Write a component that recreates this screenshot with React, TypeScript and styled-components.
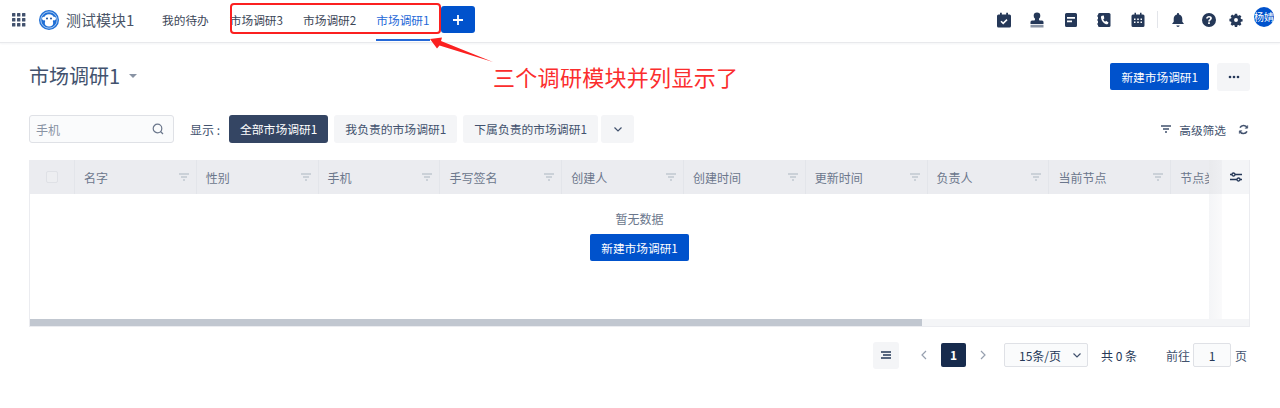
import React from "react";
import styled, { createGlobalStyle, css } from "styled-components";

const font = `"Noto Sans CJK SC", "Noto Sans", sans-serif`;

const GlobalStyle = createGlobalStyle`
  html, body {
    margin: 0;
    padding: 0;
    background: #fff;
    font-family: ${font};
    overflow: hidden;
  }
  * { box-sizing: border-box; }
`;

// 顶栏内容比导航下划线略高一点
const raised = css`
  margin-bottom: 3px;
`;

const Page = styled.div`
  position: relative;
  width: 1280px;
  height: 408px;
  overflow: hidden;
`;

const TopBar = styled.header`
  display: flex;
  align-items: center;
  height: 43px;
  padding: 0 6px 0 12px;
  border-bottom: 1px solid #e8e9ec;
  box-shadow: 0 1px 2px rgba(23, 43, 77, 0.05);
`;

const Grid = styled.svg`
  ${raised};
  width: 14px;
  height: 14px;
  margin-right: 13px;
  flex: none;
`;

const Logo = styled.svg`
  ${raised};
  width: 20px;
  height: 20px;
  margin-right: 7px;
  flex: none;
`;

const ModuleName = styled.div`
  ${raised};
  font-size: 15px;
  color: #4a5568;
  width: 69px;
  margin-right: 27px;
  white-space: nowrap;
`;

const NavItem = styled.div<{ $active?: boolean; $gap?: number }>`
  position: relative;
  height: 42px;
  line-height: 40px;
  font-size: 11.7px;
  white-space: nowrap;
  color: ${(p) => (p.$active ? "#2468d8" : "#3c4657")};
  margin-right: ${(p) => p.$gap ?? 20}px;
  &::after {
    content: "";
    display: ${(p) => (p.$active ? "block" : "none")};
    position: absolute;
    left: 0;
    right: 0;
    bottom: 1px;
    height: 2px;
    background: #2468d8;
  }
`;

const AddButton = styled.button`
  ${raised};
  width: 34px;
  height: 27px;
  border: 0;
  padding: 0;
  border-radius: 3px;
  background: #0052cc;
  display: flex;
  align-items: center;
  justify-content: center;
  margin-left: -9px;
`;

const Spacer = styled.div`
  flex: 1;
`;

const ToolIcon = styled.svg<{ $gap?: number }>`
  ${raised};
  width: 16px;
  height: 16px;
  flex: none;
  margin-right: ${(p) => p.$gap ?? 17.5}px;
  fill: #253858;
`;

const Divider = styled.div`
  ${raised};
  width: 1px;
  height: 17px;
  background: #e3e5ea;
  margin-right: 12px;
`;

const Avatar = styled.div`
  width: 20px;
  height: 20px;
  border-radius: 50%;
  background: #0052cc;
  color: #fff;
  font-size: 10px;
  line-height: 20px;
  text-align: center;
  overflow: hidden;
  white-space: nowrap;
  margin-bottom: 8px;
  display: flex;
  justify-content: center;
`;

const Content = styled.main`
  padding: 20px 30px 0 29px;
`;

const TitleRow = styled.div`
  display: flex;
  align-items: center;
  justify-content: space-between;
  height: 28px;
`;

const Title = styled.h1`
  margin: 0;
  display: flex;
  align-items: center;
  gap: 9px;
  padding-bottom: 3px;
  font-size: 20px;
  font-weight: 400;
  color: #42526e;
  &::after {
    content: "";
    border: 4px solid transparent;
    border-top: 4.5px solid #8993a4;
    border-bottom: 0;
    margin-top: 1px;
  }
`;

const Actions = styled.div`
  display: flex;
  gap: 8px;
`;

const PrimaryButton = styled.button`
  height: 27px;
  padding: 0 11px;
  border: 0;
  border-radius: 2px;
  background: #0052cc;
  color: #fff;
  font: 11.7px ${font};
  white-space: nowrap;
`;

const MoreButton = styled.button`
  width: 33px;
  height: 28px;
  border: 0;
  border-radius: 3px;
  background: #f4f5f7;
  color: #253858;
  padding: 0;
  display: flex;
  align-items: center;
  justify-content: center;
`;

const FilterRow = styled.div`
  display: flex;
  align-items: center;
  height: 28px;
  margin-top: 24px;
`;

const SearchBox = styled.div`
  width: 144.5px;
  height: 28px;
  border: 1px solid #dfe1e6;
  border-radius: 3px;
  background: #fafbfc;
  display: flex;
  align-items: center;
  justify-content: space-between;
  padding: 0 9px 0 6px;
  font-size: 12px;
  color: #8993a4;
  margin-right: 16.5px;
`;

const ShowLabel = styled.span`
  font-size: 12px;
  color: #42526e;
  width: 39px;
  white-space: nowrap;
`;

const Chip = styled.div<{ $active?: boolean }>`
  height: 28px;
  line-height: 27px;
  padding: 0 11px;
  border-radius: 3px;
  font-size: 11.8px;
  white-space: nowrap;
  margin-right: 6px;
  color: ${(p) => (p.$active ? "#fff" : "#42526e")};
  background: ${(p) => (p.$active ? "#344563" : "#f4f5f7")};
`;

const ChipToggle = styled(Chip)`
  width: 33px;
  padding: 0;
  display: flex;
  align-items: center;
  justify-content: center;
  margin-left: -3px;
`;

const RightTools = styled.div`
  margin-left: auto;
  display: flex;
  align-items: center;
  font-size: 11.7px;
  color: #42526e;
  gap: 8px;
  padding-right: 1px;
`;

const RefreshIcon = styled.svg`
  width: 11px;
  height: 11px;
  flex: none;
  margin: 1px 0 0 4px;
`;

const Table = styled.div`
  position: relative;
  height: 167px;
  margin-top: 17px;
  border: 1px solid #ebecf0;
  border-top: 0;
  overflow: hidden;
`;

const HeadRow = styled.div`
  display: flex;
  height: 34px;
  background: #ebecf0;
  margin: 0 -1px;
`;

const CheckCell = styled.div`
  width: 46px;
  flex: none;
  display: flex;
  align-items: center;
  justify-content: center;
  border-right: 1px solid #e3e5ea;
`;

const CheckBox = styled.div`
  width: 12px;
  height: 12px;
  border: 1px solid #dfe1e6;
  border-radius: 2px;
  background: #edeef1;
`;

const HeadCell = styled.div`
  width: 121.8px;
  flex: none;
  display: flex;
  align-items: center;
  justify-content: space-between;
  padding: 0 7px 0 9px;
  font-size: 12px;
  color: #6b778c;
  border-right: 1px solid #e3e5ea;
  white-space: nowrap;
  overflow: hidden;
`;

const FilterSvg = styled.svg`
  width: 10px;
  height: 8px;
  flex: none;
`;

const FixedColumn = styled.div`
  position: absolute;
  top: 0;
  right: 0;
  bottom: 7px;
  width: 40px;
  display: flex;
  flex-direction: column;
  background: linear-gradient(90deg, #f4f5f7 0, #fafafb 13px, #fff 13px);
`;

const FixedHead = styled.div`
  height: 34px;
  flex: none;
  display: flex;
  align-items: center;
  justify-content: flex-end;
  padding-right: 6px;
  background: linear-gradient(90deg, #e9eaed 0, #eeeff2 13px, #f4f5f7 13px);
`;

const Empty = styled.div`
  display: flex;
  flex-direction: column;
  align-items: center;
  padding-top: 16px;
  font-size: 12px;
  color: #6b778c;
  gap: 6px;
  line-height: 18px;
`;

const ScrollTrack = styled.div`
  position: absolute;
  left: 0;
  right: 0;
  bottom: 0;
  height: 7px;
  background: #f4f5f7;
`;

const ScrollThumb = styled.div`
  height: 100%;
  background: #c1c7d0;
`;

const Pager = styled.div`
  display: flex;
  align-items: center;
  justify-content: flex-end;
  height: 28px;
  margin-top: 14px;
  font-size: 12px;
  color: #42526e;
  padding-right: 3px;
`;

const ListToggle = styled.div`
  width: 26px;
  height: 27px;
  border-radius: 3px;
  background: #f4f5f7;
  display: flex;
  align-items: center;
  justify-content: center;
  margin-right: 19.5px;
`;

const PageArrow = styled.svg`
  width: 12px;
  height: 12px;
  flex: none;
`;

const PageCurrent = styled.div`
  width: 25px;
  height: 24px;
  border-radius: 2px;
  background: #172b4d;
  color: #fff;
  font-weight: 700;
  font-size: 12px;
  line-height: 24px;
  text-align: center;
  margin: 0 11px 0 10.5px;
`;

const PageSize = styled.div`
  width: 84px;
  height: 24px;
  border: 1px solid #dfe1e6;
  border-radius: 2px;
  background: #fafbfc;
  display: flex;
  align-items: center;
  justify-content: space-between;
  padding: 0 5px 0 14px;
  margin-left: 15px;
  margin-right: 13px;
  color: #253858;
`;

const Total = styled.span`
  width: 65px;
  white-space: nowrap;
  color: #253858;
`;

const PageInput = styled.div`
  width: 38px;
  height: 24px;
  border: 1px solid #dfe1e6;
  border-radius: 2px;
  background: #fafbfc;
  text-align: center;
  line-height: 23px;
  margin: 0 4px 0 3px;
  color: #253858;
`;

// 标注层：截图上人工加的红框、箭头和说明文字
const RedBox = styled.div`
  position: absolute;
  left: 230px;
  top: 3px;
  width: 211px;
  height: 31px;
  border: 2px solid #fb2020;
  border-radius: 4px;
`;

const Arrow = styled.svg`
  position: absolute;
  left: 425px;
  top: 32px;
  width: 75px;
  height: 35px;
`;

const Note = styled.div`
  position: absolute;
  left: 493px;
  top: 60px;
  font-size: 22px;
  line-height: 32px;
  letter-spacing: 0.3px;
  color: #fb2d2d;
  white-space: nowrap;
`;

const FilterGlyph = ({ color = "#c1c7d0" }: { color?: string }) => (
  <FilterSvg viewBox="0 0 10 8">
    <path d="M0 1h10M2 4h6M4 7h2" stroke={color} strokeWidth="1.3" fill="none" />
  </FilterSvg>
);

const Chevron = () => (
  <svg width="10" height="10" viewBox="0 0 10 10">
    <path d="M1.5 3.5L5 7l3.5-3.5" stroke="#42526e" strokeWidth="1.2" fill="none" />
  </svg>
);

const columns = ["名字", "性别", "手机", "手写签名", "创建人", "创建时间", "更新时间", "负责人", "当前节点", "节点类型"];

const App = () => (
  <Page>
    <GlobalStyle />
    <TopBar>
      <Grid viewBox="0 0 14 14" fill="#42526e">
        {[0, 5, 10].flatMap((y) =>
          [0, 5, 10].map((x) => <rect key={`${x}-${y}`} x={x} y={y} width="3.4" height="3.4" rx="0.5" />)
        )}
      </Grid>
      <Logo viewBox="0 0 20 20">
        <circle cx="10" cy="10" r="10" fill="#1f6fd6" />
        <circle cx="10" cy="10" r="8.2" fill="none" stroke="#cfe2f8" strokeWidth="0.8" />
        <circle cx="4.8" cy="8.6" r="1.8" fill="#fff" />
        <circle cx="15.2" cy="8.6" r="1.8" fill="#fff" />
        <ellipse cx="10" cy="8.4" rx="5" ry="4.2" fill="#fff" />
        <ellipse cx="10" cy="13" rx="4.2" ry="3.4" fill="#fff" />
        <circle cx="8" cy="8.4" r="1" fill="#1f4f9c" />
        <circle cx="12" cy="8.4" r="1" fill="#1f4f9c" />
      </Logo>
      <ModuleName>测试模块1</ModuleName>
      <NavItem $gap={21}>我的待办</NavItem>
      <NavItem>市场调研3</NavItem>
      <NavItem>市场调研2</NavItem>
      <NavItem $active>市场调研1</NavItem>
      <AddButton>
        <svg width="12" height="12" viewBox="0 0 12 12">
          <path d="M6 1v10M1 6h10" stroke="#fff" strokeWidth="1.8" />
        </svg>
      </AddButton>
      <Spacer />
      <ToolIcon viewBox="0 0 16 16">
        <path d="M2.500 2.500H4V.8h1.800v1.700h4.400V.8H12v1.700h1.500A1.500 1.500 0 0 1 15 4v10a1.500 1.500 0 0 1-1.500 1.500h-11A1.500 1.500 0 0 1 1 14V4a1.500 1.500 0 0 1 1.500-1.500z" />
        <path d="M5 9.200l2.200 2.200L11 7.600" fill="none" stroke="#fff" strokeWidth="1.500" />
      </ToolIcon>
      <ToolIcon viewBox="0 0 16 16">
        <circle cx="8" cy="3.800" r="3.300" />
        <path d="M6 6h4v1.500c0 .7.300 1 .9 1H13a1.500 1.500 0 0 1 1.500 1.500v2h-13v-2A1.500 1.500 0 0 1 3 8.500h2.100c.6 0 .9-.3.900-1z" />
        <rect x="1.500" y="12.800" width="13" height="2.700" fill="#8993a4" />
      </ToolIcon>
      <ToolIcon viewBox="0 0 16 16">
        <path d="M3.500 1h9A1.500 1.500 0 0 1 14 2.500v11a1.500 1.500 0 0 1-1.500 1.500h-9A1.500 1.500 0 0 1 2 13.500v-11A1.500 1.500 0 0 1 3.500 1zM4 5v1.800h8V5zm0 3.500v1.800h5V8.500z" fillRule="evenodd" />
      </ToolIcon>
      <ToolIcon viewBox="0 0 16 16">
        <path d="M3.500 1H13a1.500 1.500 0 0 1 1.500 1.500v11A1.500 1.500 0 0 1 13 15H3.500A1.500 1.500 0 0 1 2 13.500v-11A1.500 1.500 0 0 1 3.500 1z" />
        <path d="M1 4h2M1 8h2M1 12h2" stroke="#253858" strokeWidth="1.200" />
        <path d="M6 3.800c-.8.400-1.200 1.100-1 2 .5 3 2.400 5.400 5 6.400.9.300 1.700 0 2.100-.8l.4-1-2.400-1.600-1 .9c-.9-.6-1.500-1.500-1.900-2.500l1.100-.8L7.800 3.600z" fill="#fff" />
      </ToolIcon>
      <ToolIcon $gap={11.2} viewBox="0 0 16 16">
        <path d="M3 2.500h1.500V.8H6v1.700h4V.8h1.500v1.700H13A1.500 1.500 0 0 1 14.500 4v9.500A1.500 1.500 0 0 1 13 15H3a1.500 1.500 0 0 1-1.500-1.500V4A1.500 1.500 0 0 1 3 2.500zM4 6.500V8h1.500V6.500zm3.200 0V8h1.600V6.500zm3.300 0V8H12V6.500zM4 9.500V11h1.500V9.500zm3.200 0V11h1.600V9.500zm3.300 0V11H12V9.500z" fillRule="evenodd" />
      </ToolIcon>
      <Divider />
      <ToolIcon $gap={14.5} viewBox="0 0 16 16">
        <path d="M8 1c.6 0 1 .4 1 1v.5c2 .5 3.300 2.200 3.300 4.300v3l1.700 2.200H2l1.700-2.200v-3c0-2.100 1.300-3.800 3.300-4.300V2c0-.6.400-1 1-1zM6.300 13.500h3.400A1.800 1.800 0 0 1 8 15a1.800 1.800 0 0 1-1.700-1.500z" />
      </ToolIcon>
      <ToolIcon $gap={11} viewBox="0 0 16 16">
        <path d="M8 1a7 7 0 1 1 0 14A7 7 0 0 1 8 1zM7.100 10.300v1.700h1.800v-1.700zM8 4c-1.600 0-2.800.9-2.900 2.400h1.700c.1-.6.500-1 1.200-1s1.100.4 1.100.9c0 1-1.900 1.200-1.900 3.200h1.700c0-1.400 2-1.600 2-3.300C10.900 4.800 9.700 4 8 4z" fillRule="evenodd" />
      </ToolIcon>
      <ToolIcon $gap={10.5} viewBox="-1 -1 18 18">
        <path d="M6.700 1h2.600l.3 1.800 1.200.5 1.500-1 1.800 1.800-1 1.500.5 1.200 1.800.3v2.600l-1.800.3-.5 1.200 1 1.500-1.800 1.800-1.500-1-1.200.5-.3 1.800H6.700l-.3-1.800-1.200-.5-1.500 1-1.800-1.800 1-1.500-.5-1.200L.6 9.300V6.700l1.800-.3.500-1.200-1-1.500 1.800-1.800 1.500 1 1.200-.5zM8 5.800a2.200 2.200 0 1 0 0 4.400 2.200 2.200 0 0 0 0-4.400z" fillRule="evenodd" />
      </ToolIcon>
      <Avatar>杨婧</Avatar>
    </TopBar>

    <Content>
      <TitleRow>
        <Title>市场调研1</Title>
        <Actions>
          <PrimaryButton>新建市场调研1</PrimaryButton>
          <MoreButton>
            <svg width="12" height="4" viewBox="0 0 12 4" fill="#253858">
              <circle cx="2" cy="2" r="1.300" />
              <circle cx="6" cy="2" r="1.300" />
              <circle cx="10" cy="2" r="1.300" />
            </svg>
          </MoreButton>
        </Actions>
      </TitleRow>

      <FilterRow>
        <SearchBox>
          手机
          <svg width="12" height="12" viewBox="0 0 12 12" fill="none" stroke="#6b778c" strokeWidth="1.200">
            <circle cx="5.500" cy="5.500" r="4.300" />
            <path d="M8.500 8.500L11 11" />
          </svg>
        </SearchBox>
        <ShowLabel>显示 :</ShowLabel>
        <Chip $active>全部市场调研1</Chip>
        <Chip>我负责的市场调研1</Chip>
        <Chip>下属负责的市场调研1</Chip>
        <ChipToggle>
          <Chevron />
        </ChipToggle>
        <RightTools>
          <FilterGlyph color="#42526e" />
          高级筛选
          <RefreshIcon viewBox="0 0 12 12" fill="none" stroke="#42526e" strokeWidth="1.800">
            <path d="M10 4.200A4.300 4.300 0 0 0 2.200 4M2 7.800A4.300 4.300 0 0 0 9.800 8" />
            <path d="M10.500 1.500v3h-3M1.500 10.500v-3h3" strokeWidth="1" />
          </RefreshIcon>
        </RightTools>
      </FilterRow>

      <Table>
        <HeadRow>
          <CheckCell>
            <CheckBox />
          </CheckCell>
          {columns.map((name) => (
            <HeadCell key={name}>
              {name}
              <FilterGlyph />
            </HeadCell>
          ))}
        </HeadRow>
        <Empty>
          暂无数据
          <PrimaryButton>新建市场调研1</PrimaryButton>
        </Empty>
        <FixedColumn>
          <FixedHead>
            <svg width="14" height="12" viewBox="0 0 14 12" fill="none" stroke="#253858" strokeWidth="1.300">
              <path d="M1 3.500h12M1 8.500h12" />
              <circle cx="4.500" cy="3.500" r="1.500" fill="#f4f5f7" />
              <circle cx="9.500" cy="8.500" r="1.500" fill="#f4f5f7" />
            </svg>
          </FixedHead>
        </FixedColumn>
        <ScrollTrack>
          <ScrollThumb style={{ width: `${(893 / 1221) * 100}%` }} />
        </ScrollTrack>
      </Table>

      <Pager>
        <ListToggle>
          <svg width="10" height="8" viewBox="0 0 10 8" fill="none" stroke="#253858" strokeWidth="1.600">
            <path d="M0 1h10M2 4h8M0 7h10" />
          </svg>
        </ListToggle>
        <PageArrow viewBox="0 0 12 12">
          <path d="M8 2L4 6l4 4" stroke="#97a0af" strokeWidth="1.200" fill="none" />
        </PageArrow>
        <PageCurrent>1</PageCurrent>
        <PageArrow viewBox="0 0 12 12">
          <path d="M4 2l4 4-4 4" stroke="#97a0af" strokeWidth="1.200" fill="none" />
        </PageArrow>
        <PageSize>
          15条/页
          <Chevron />
        </PageSize>
        <Total>共 0 条</Total>
        前往
        <PageInput>1</PageInput>
        页
      </Pager>
    </Content>

    <RedBox />
    <Arrow viewBox="0 0 75 35">
      <path d="M5 7L17 5.500 16 9 68 30 14.500 13.500 12 16.500z" fill="#fb2020" />
    </Arrow>
    <Note>三个调研模块并列显示了</Note>
  </Page>
);

export default App;
